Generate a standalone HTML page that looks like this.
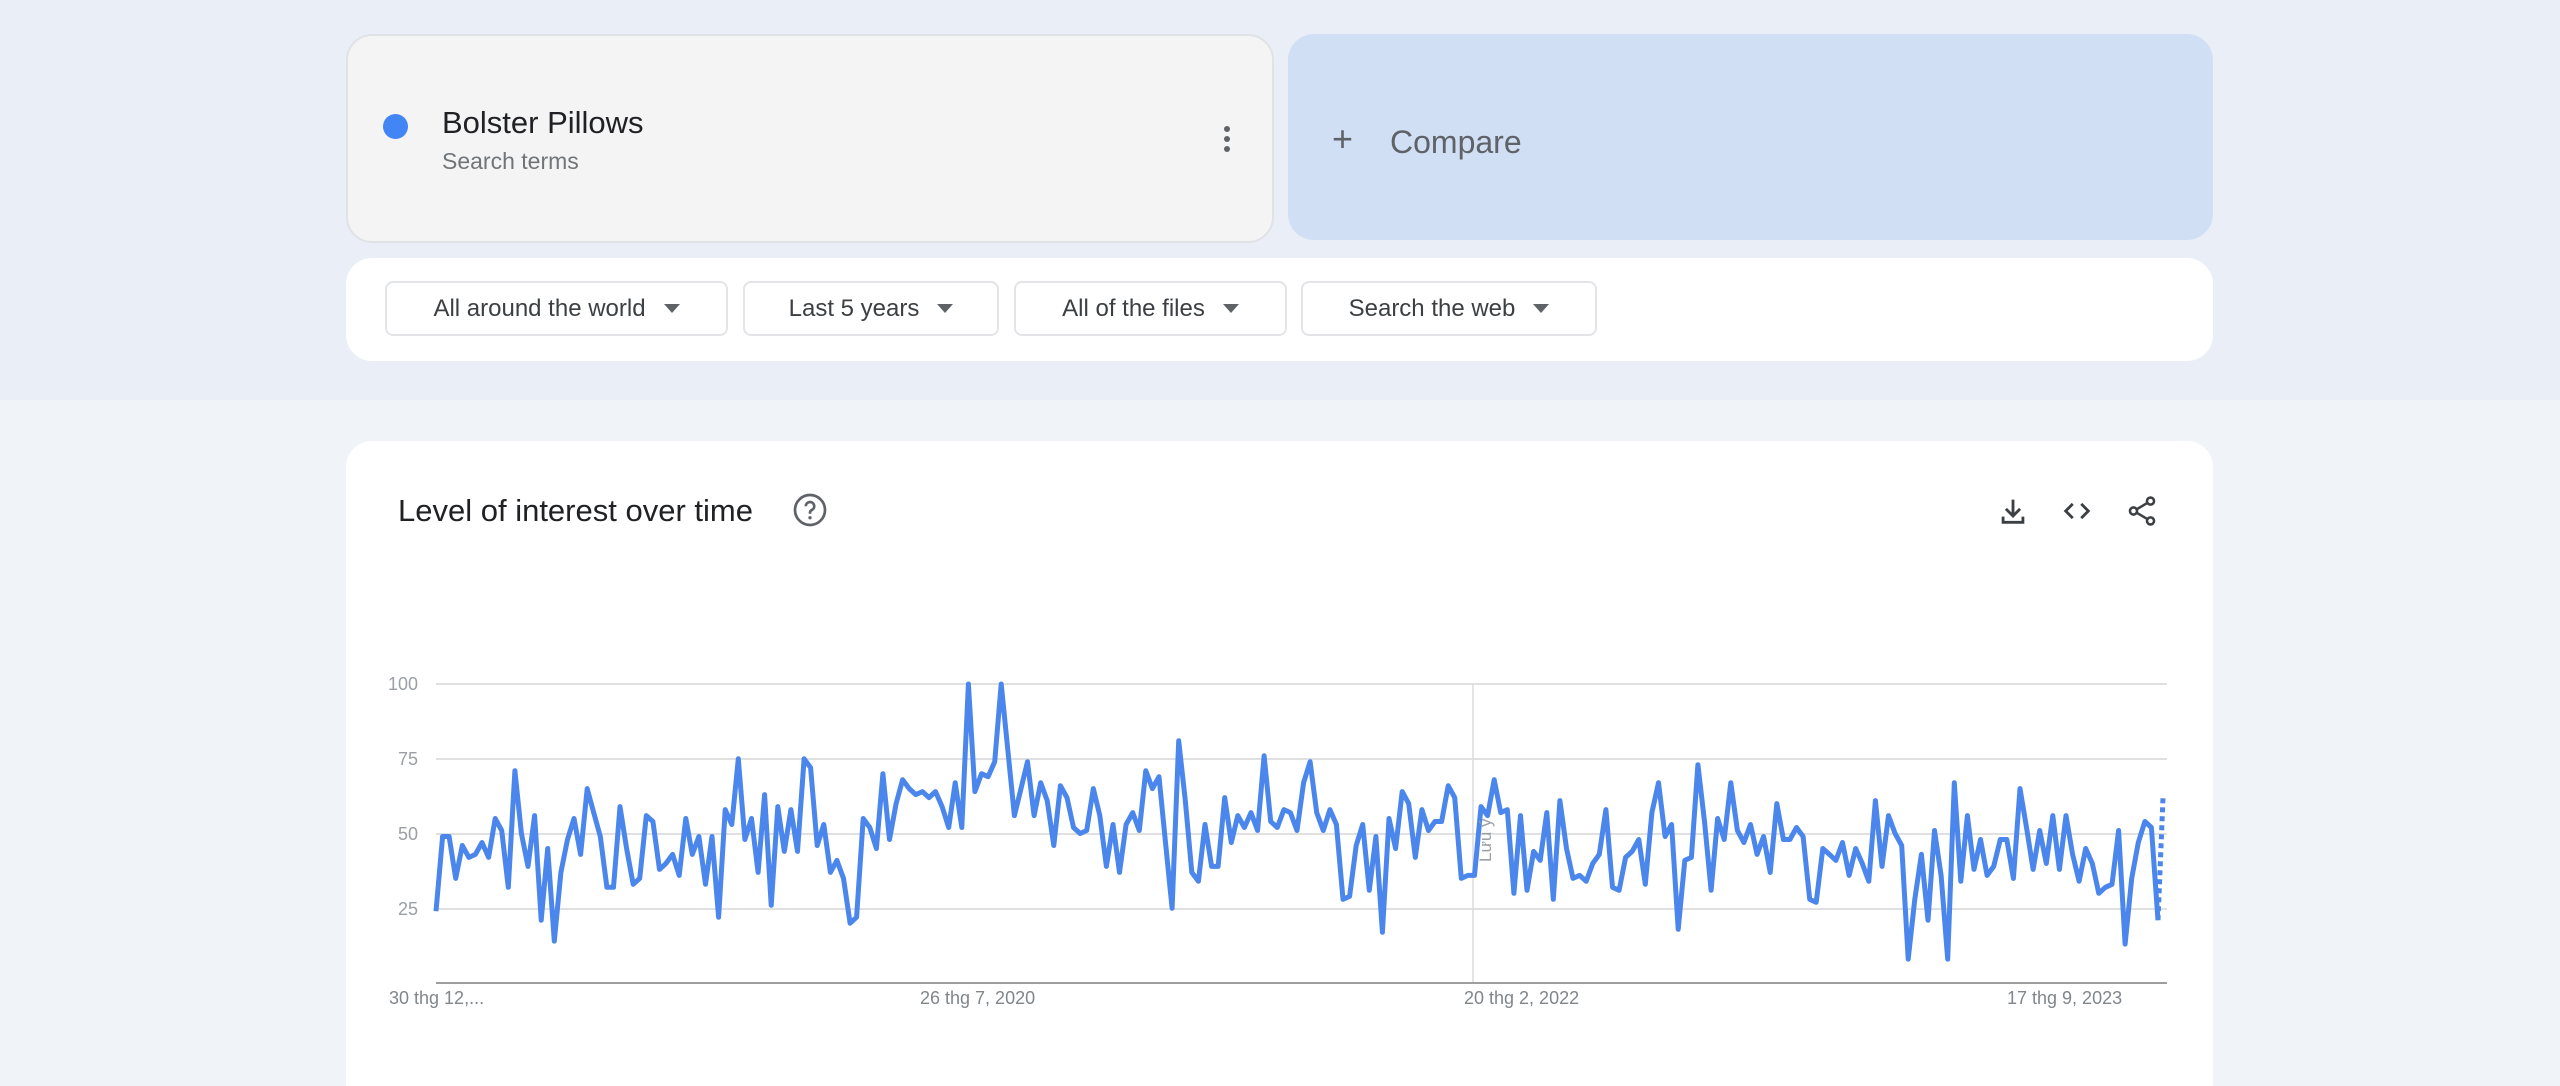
<!DOCTYPE html>
<html><head><meta charset="utf-8"><style>
*{box-sizing:border-box;margin:0;padding:0}
html,body{width:2560px;height:1086px;overflow:hidden}
body{background:#f0f4f9;font-family:"Liberation Sans",sans-serif;position:relative}
.band{position:absolute;left:0;top:0;width:2560px;height:400px;background:#e9eef7}
.card{position:absolute;border-radius:26px}
.term{left:346px;top:34px;width:928px;height:209px;background:#f4f4f4;border:2px solid #e0e2e6}
.cmp{left:1288px;top:34px;width:925px;height:206px;background:#d1dff4}
.filt{left:346px;top:258px;width:1867px;height:103px;background:#fff}
.chart{left:346px;top:441px;width:1867px;height:645px;border-radius:26px 26px 0 0;background:#fff}
.chip{position:absolute;top:281px;height:55px;border:2px solid #e3e4e7;border-radius:8px;background:#fff;font-size:24px;color:#3c4043;display:flex;align-items:center;justify-content:center;gap:18px}
.tri{width:0;height:0;border-left:8px solid transparent;border-right:8px solid transparent;border-top:9px solid #5f6368}
.t{position:absolute;white-space:nowrap}
.yl{position:absolute;left:388px;font-size:18px;color:#9aa0a6}
.xl{position:absolute;top:988px;font-size:18px;color:#80868b}
</style></head><body>
<div class="band"></div>
<div class="card term"></div>
<div style="position:absolute;left:383px;top:114px;width:25px;height:25px;border-radius:50%;background:#4285f4"></div>
<div class="t" style="left:442px;top:105px;font-size:31px;color:#202124">Bolster Pillows</div>
<div class="t" style="left:442px;top:148px;font-size:23px;color:#70757a">Search terms</div>
<div style="position:absolute;left:1224px;top:126px;width:6px">
<div style="width:6px;height:6px;border-radius:50%;background:#5f6368;margin-bottom:4px"></div>
<div style="width:6px;height:6px;border-radius:50%;background:#5f6368;margin-bottom:4px"></div>
<div style="width:6px;height:6px;border-radius:50%;background:#5f6368"></div></div>
<div class="card cmp"></div>
<div class="t" style="left:1332px;top:118px;font-size:36px;color:#5f6368">+</div>
<div class="t" style="left:1390px;top:124px;font-size:32px;color:#5f6368">Compare</div>
<div class="card filt"></div>
<div class="chip" style="left:385px;width:343px">All around the world<span class="tri"></span></div>
<div class="chip" style="left:743px;width:256px">Last 5 years<span class="tri"></span></div>
<div class="chip" style="left:1014px;width:273px">All of the files<span class="tri"></span></div>
<div class="chip" style="left:1301px;width:296px">Search the web<span class="tri"></span></div>
<div class="card chart"></div>
<div class="t" style="left:398px;top:493px;font-size:31px;color:#202124">Level of interest over time</div>
<svg style="position:absolute;left:792px;top:492px" width="36" height="36" viewBox="0 0 24 24"><circle cx="12" cy="12" r="10" fill="none" stroke="#5f6368" stroke-width="1.8"/><path d="M9.2 9.5a2.8 2.8 0 1 1 4 2.5c-.8.4-1.2 1-1.2 1.9v.6" fill="none" stroke="#5f6368" stroke-width="1.8"/><circle cx="12" cy="17.2" r="1.1" fill="#5f6368"/></svg>
<svg style="position:absolute;left:1996px;top:494px" width="34" height="34" viewBox="0 0 24 24"><path d="M12 4v11M7 10.5l5 5 5-5M5 16v4h14v-4" fill="none" stroke="#3c4043" stroke-width="2"/></svg>
<svg style="position:absolute;left:2060px;top:494px" width="34" height="34" viewBox="0 0 24 24"><path d="M9 7l-5 5 5 5M15 7l5 5-5 5" fill="none" stroke="#3c4043" stroke-width="2"/></svg>
<svg style="position:absolute;left:2125px;top:494px" width="34" height="34" viewBox="0 0 24 24"><circle cx="18" cy="5" r="2.5" fill="none" stroke="#3c4043" stroke-width="1.8"/><circle cx="6" cy="12" r="2.5" fill="none" stroke="#3c4043" stroke-width="1.8"/><circle cx="18" cy="19" r="2.5" fill="none" stroke="#3c4043" stroke-width="1.8"/><path d="M8.2 10.8l7.6-4.5M8.2 13.2l7.6 4.5" stroke="#3c4043" stroke-width="1.8"/></svg>
<svg style="position:absolute;left:0;top:0" width="2560" height="1086">
<g stroke="#e0e0e0" stroke-width="2"><line x1="436" y1="684" x2="2167" y2="684"/><line x1="436" y1="759" x2="2167" y2="759"/><line x1="436" y1="834" x2="2167" y2="834"/><line x1="436" y1="909" x2="2167" y2="909"/></g>
<line x1="1473" y1="684" x2="1473" y2="983" stroke="#dadce0" stroke-width="1.5"/>
<line x1="436" y1="983" x2="2167" y2="983" stroke="#9e9e9e" stroke-width="2"/>
<polyline id="pl" fill="none" stroke="#4a86ec" stroke-width="5" stroke-linejoin="round"/>
<polyline id="pd" fill="none" stroke="#4a86ec" stroke-width="5" stroke-dasharray="5 4"/>
<text x="0" y="0" transform="translate(1491,862) rotate(-90)" font-family="Liberation Sans" font-size="17" fill="#9aa0a6">Lưu ý</text>
</svg>
<div class="yl" style="top:674px">100</div><div class="yl" style="top:749px;left:398px">75</div><div class="yl" style="top:824px;left:398px">50</div><div class="yl" style="top:899px;left:398px">25</div>
<div class="xl" style="left:389px">30 thg 12,...</div>
<div class="xl" style="left:920px">26 thg 7, 2020</div>
<div class="xl" style="left:1464px">20 thg 2, 2022</div>
<div class="xl" style="left:2007px">17 thg 9, 2023</div>
<script>
var v=[24,49,49,35,46,42,43,47,42,55,51,32,71,50,39,56,21,45,14,37,48,55,43,65,57,49,32,32,59,45,33,35,56,54,38,40,43,36,55,43,49,33,49,22,58,53,75,48,55,37,63,26,59,44,58,44,75,72,46,53,37,41,35,20,22,55,52,45,70,48,60,68,65,63,64,62,64,59,52,67,52,100,64,70,69,74,100,78,56,65,74,56,67,61,46,66,62,52,50,51,65,56,39,53,37,53,57,51,71,65,69,47,25,81,61,37,34,53,39,39,62,47,56,52,57,51,76,54,52,58,57,51,67,74,57,51,58,53,28,29,46,53,31,49,17,55,45,64,60,42,58,51,54,54,66,62,35,36,36,59,56,68,57,58,30,56,31,44,41,57,28,61,45,35,36,34,40,43,58,32,31,42,44,48,33,57,67,49,53,18,41,42,73,54,31,55,48,67,51,47,53,43,49,37,60,48,48,52,49,28,27,45,43,41,47,36,45,40,34,61,39,56,50,46,8,28,43,21,51,36,8,67,34,56,38,48,36,39,48,48,35,65,52,38,51,40,56,38,56,43,34,45,40,30,32,33,51,13,35,47,54,52,21];
var x0=436,x1=2158,n=v.length,p=[];
for(var i=0;i<n;i++){p.push((x0+(x1-x0)*i/(n-1)).toFixed(1)+","+(983-v[i]*2.99).toFixed(1));}
document.getElementById('pl').setAttribute('points',p.join(' '));
document.getElementById('pd').setAttribute('points',p[n-1]+" 2163,"+(983-62*2.99));
</script>
</body></html>
